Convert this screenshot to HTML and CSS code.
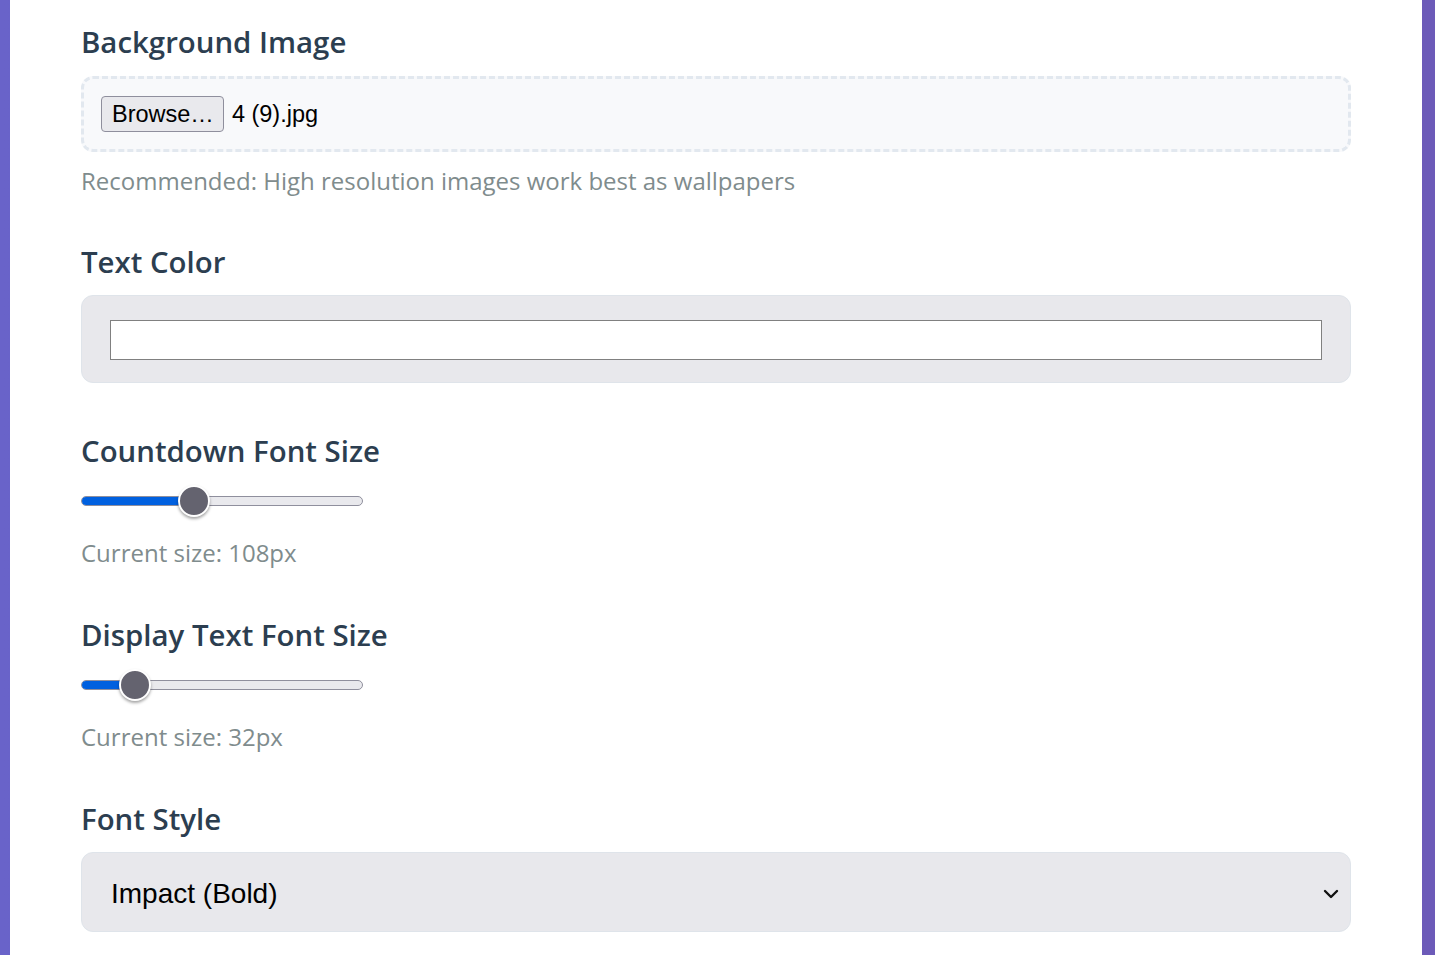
FILE: index.html
```html
<!DOCTYPE html>
<html lang="en">
<head>
<meta charset="utf-8">
<title>Settings</title>
<link rel="stylesheet" href="styles.css">
</head>
<body>
<div class="page">
  <div class="card">
    <div class="group group-file">
      <div class="label">Background Image</div>
      <div class="file-box">
        <span class="file-btn">Browse…</span>
        <span class="file-name">4 (9).jpg</span>
      </div>
      <div class="hint hint-file">Recommended: High resolution images work best as wallpapers</div>
    </div>

    <div class="group">
      <div class="label">Text Color</div>
      <div class="color-box">
        <div class="color-input"></div>
      </div>
    </div>

    <div class="group group-slider">
      <div class="label">Countdown Font Size</div>
      <div class="slider">
        <div class="track"><div class="fill" style="width: 113px"></div></div>
        <div class="thumb" style="left: 97px"></div>
      </div>
      <div class="hint hint-slider">Current size: 108px</div>
    </div>

    <div class="group group-slider">
      <div class="label">Display Text Font Size</div>
      <div class="slider">
        <div class="track"><div class="fill" style="width: 54px"></div></div>
        <div class="thumb" style="left: 38px"></div>
      </div>
      <div class="hint hint-slider">Current size: 32px</div>
    </div>

    <div class="group">
      <div class="label">Font Style</div>
      <div class="select">
        <span class="select-text">Impact (Bold)</span>
        <svg class="chevron" width="16" height="10" viewBox="0 0 16 10"><path d="M2 2 L8 8 L14 2" fill="none" stroke="#111" stroke-width="2.4" stroke-linecap="round" stroke-linejoin="round"/></svg>
      </div>
    </div>
  </div>
</div>
</body>
</html>
```

FILE: styles.css
```css
html, body {
  margin: 0;
  padding: 0;
}
body {
  background: linear-gradient(90deg, #6963c9 0%, #6c5ab8 100%);
  height: 955px;
  overflow: hidden;
}
.page {
  padding: 0 13px 0 10px;
  height: 955px;
}
.card {
  background: #ffffff;
  height: 955px;
  padding: 22px 71px 0 71px;
  box-sizing: border-box;
  font-family: "Open Sans", "Noto Sans", sans-serif;
}
.group {
  margin-bottom: 48px;
}
.group-slider {
  margin-bottom: 49px;
}
.label {
  height: 40px;
  line-height: 40px;
  font-size: 29.4px;
  font-weight: 600;
  color: #2c3e50;
  margin-bottom: 13px;
  white-space: nowrap;
}
.group-file .label {
  margin-bottom: 14px;
}
.file-box {
  height: 76px;
  box-sizing: border-box;
  border: 3px dashed #e2e8ef;
  border-radius: 12px;
  background: #f8f9fb;
  padding: 17px;
  display: flex;
  align-items: center;
  font-family: "Liberation Sans", Arial, sans-serif;
  font-size: 23.5px;
  color: #000;
}
.file-btn {
  height: 36px;
  box-sizing: border-box;
  border: 1px solid #8f8f9d;
  border-radius: 4px;
  background: #e9e9ed;
  padding: 0 9px 0 10px;
  display: flex;
  align-items: center;
  margin-right: 8px;
}
.hint {
  height: 26px;
  line-height: 26px;
  font-size: 24px;
  color: #7f8c8d;
  white-space: nowrap;
}
.hint-file {
  margin-top: 16px;
}
.hint-slider {
  margin-top: 23px;
}
.color-box {
  height: 88px;
  box-sizing: border-box;
  border: 1px solid #dfe4ea;
  border-radius: 12px;
  background: #e8e8ec;
  padding: 24px 28px 22px;
}
.color-input {
  height: 40px;
  box-sizing: border-box;
  border: 1px solid #808080;
  background: #ffffff;
}
.slider {
  position: relative;
  width: 282px;
  height: 32px;
  margin-top: 14px;
  display: flex;
  align-items: center;
}
.track {
  width: 100%;
  height: 10px;
  box-sizing: border-box;
  border: 1px solid #8f8f9d;
  border-radius: 5px;
  background: #e9e9ed;
  overflow: hidden;
}
.fill {
  height: 100%;
  background: #0060df;
}
.thumb {
  position: absolute;
  top: 0;
  width: 32px;
  height: 32px;
  box-sizing: border-box;
  border-radius: 50%;
  background: #64636f;
  border: 2px solid #ffffff;
  box-shadow: 0 2px 3px rgba(0, 0, 0, 0.35);
}
.select {
  height: 80px;
  box-sizing: border-box;
  border: 1px solid #dfe4ea;
  border-radius: 12px;
  background: #e8e8ec;
  padding: 3px 11px 0 29px;
  display: flex;
  align-items: center;
  justify-content: space-between;
  font-family: "Liberation Sans", Arial, sans-serif;
  font-size: 28px;
  color: #000;
}
.chevron {
  display: block;
}
```
